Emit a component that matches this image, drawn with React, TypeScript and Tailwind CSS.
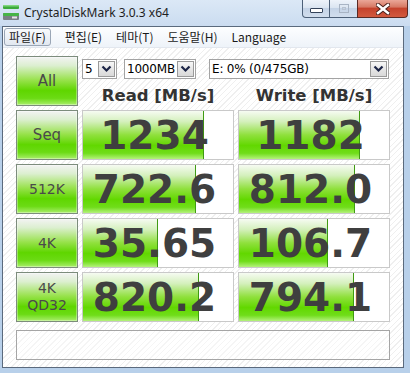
import React from "react";

type Row = {
  label: string[];
  big: boolean;
  read: string;
  rw: number;
  write: string;
  ww: number;
};

const rows: Row[] = [
  { label: ["Seq"], big: true, read: "1234", rw: 121, write: "1182", ww: 121 },
  { label: ["512K"], big: false, read: "722.6", rw: 113, write: "812.0", ww: 116 },
  { label: ["4K"], big: false, read: "35.65", rw: 75, write: "106.7", ww: 89 },
  { label: ["4K", "QD32"], big: false, read: "820.2", rw: 116, write: "794.1", ww: 115 },
];

function Chevron() {
  return (
    <svg width="11" height="8" viewBox="0 0 11 8">
      <polyline points="1.5,1.5 5.5,5.5 9.5,1.5" fill="none" stroke="#1b2446" strokeWidth="2.2" />
    </svg>
  );
}

function Select({ w, text }: { w: string; text: string }) {
  return (
    <div className={`flex h-[20px] border border-[#a3a3a3] bg-white ${w}`}>
      <div className="min-w-0 flex-1 whitespace-nowrap pl-[2px] font-['DejaVu_Sans',sans-serif] text-[12px] leading-[18px] tracking-[-0.2px] text-black">
        {text}
      </div>
      <div className="m-px flex w-[17px] shrink-0 items-center justify-center border border-[#9a9a9a] bg-[linear-gradient(to_bottom,#f7f7f7,#e6e6e6_50%,#d9d9d9)]">
        <Chevron />
      </div>
    </div>
  );
}

function GreenButton({ label, big }: { label: string[]; big: boolean }) {
  return (
    <div className="flex h-[50px] flex-col items-center justify-center border border-[#7c8c7c] bg-[linear-gradient(to_bottom,#f3f3f3_0%,#dcefd0_18%,#98e24c_48%,#5fd600_70%,#6bdb14_86%,#aaee6c_100%)] shadow-[inset_0_0_0_1px_rgba(255,255,255,0.35)]">
      {label.map((l) => (
        <span
          key={l}
          className={`font-['DejaVu_Sans',sans-serif] text-[#4a4a4a] ${big ? "text-[15px] leading-[18px]" : "text-[14px] leading-[17px]"}`}
        >
          {l}
        </span>
      ))}
    </div>
  );
}

function ValueBox({ value, width }: { value: string; width: number }) {
  return (
    <div className="relative flex h-[50px] items-center justify-center border border-[#c9c9c9] bg-white pr-[7px]">
      <div
        className="absolute left-0 top-0 bottom-0 border-r border-[#3f9a12] bg-[linear-gradient(to_bottom,#f6fbf2_0%,#d4f0bc_22%,#8fe03c_50%,#62d800_72%,#70dd1a_88%,#b4f27c_100%)]"
        style={{ width }}
      />
      <span className="relative font-['DejaVu_Sans',sans-serif] text-[39px] font-bold leading-none text-[#3f3f3f]">
        {value}
      </span>
    </div>
  );
}

function AppIcon() {
  return (
    <svg width="16" height="15" viewBox="0 0 16 15">
      <rect x="0" y="0" width="16" height="4" rx="1" fill="#3caa3c" />
      <rect x="0" y="0" width="16" height="1.5" fill="#7fd67f" />
      <rect x="0" y="8" width="16" height="7" rx="1" fill="#7a7f86" />
      <rect x="0" y="8" width="16" height="3" rx="1" fill="#46b446" />
      <rect x="9" y="11.5" width="5" height="2" fill="#e6e6e6" />
    </svg>
  );
}

export default function App() {
  const menu = ["편집(E)", "테마(T)", "도움말(H)", "Language"];
  return (
    <div className="flex h-[373px] w-[410px] flex-col overflow-hidden bg-[#b8d0ea] font-['Noto_Sans',sans-serif]">
      {/* title bar */}
      <div className="flex h-[26px] shrink-0 items-start bg-[linear-gradient(to_bottom,#dbe8f6,#cbdcf0)]">
        <div className="ml-[3px] mt-[5px]">
          <AppIcon />
        </div>
        <div className="ml-[5px] mt-[4px] font-['Noto_Sans',sans-serif] text-[12px] leading-[17px] text-[#1e1e1e]">
          CrystalDiskMark 3.0.3 x64
        </div>
        <div className="ml-auto mr-[2px] flex h-[18px]">
          <div className="flex w-[28px] items-center justify-center rounded-bl-[4px] border border-t-0 border-[#4d6078] bg-[linear-gradient(to_bottom,#eef3fa,#dbe5f1_45%,#c4d3e6_50%,#d2deed)]">
            <div className="mt-[4px] h-[5px] w-[13px] rounded-[1px] border border-[#34435a] bg-white" />
          </div>
          <div className="flex w-[27px] items-center justify-center border-b border-[#4d6078] bg-[linear-gradient(to_bottom,#eef3fa,#dbe5f1_45%,#c4d3e6_50%,#d2deed)]">
            <div className="flex h-[9px] w-[10px] items-center justify-center border border-[#a8b4c4]">
              <div className="h-[3px] w-[4px] border border-[#b8c2d0]" />
            </div>
          </div>
          <div className="flex w-[51px] items-center justify-center rounded-br-[4px] border border-t-0 border-[#5a2a24] bg-[linear-gradient(to_bottom,#eaa798,#d77a66_40%,#c5432d_50%,#d25a3f)]">
            <svg width="14" height="12" viewBox="0 0 14 12">
              <path d="M2 2 L12 10 M12 2 L2 10" stroke="#4a1f1a" strokeWidth="4.5" strokeLinecap="square" />
              <path d="M2 2 L12 10 M12 2 L2 10" stroke="#ffffff" strokeWidth="2.5" strokeLinecap="square" />
            </svg>
          </div>
        </div>
      </div>

      {/* client frame */}
      <div className="mb-[5px] ml-[2px] mr-[6px] flex flex-1 flex-col border border-[#5b6a7d]">
        {/* menu bar */}
        <div className="flex h-[21px] shrink-0 items-center border-b border-[#e2e7ee] bg-[linear-gradient(to_bottom,#fdfeff,#eef3f9)] pl-px font-['Noto_Sans_CJK_KR','Noto_Sans',sans-serif] text-[12px] text-[#1a1a1a]">
          <div className="flex h-[18px] items-center rounded-[3px] border border-[#9aa6b6] bg-[linear-gradient(to_bottom,#f8fafc,#e2e8f0)] px-[4px] leading-none">
            파일(F)
          </div>
          {menu.map((m) => (
            <div key={m} className="ml-[14px] leading-none">
              {m}
            </div>
          ))}
        </div>

        {/* client */}
        <div className="flex-1 bg-[repeating-linear-gradient(135deg,#ffffff_0px,#ffffff_3px,#efefef_3px,#efefef_4px)] pl-[13px] pt-[8px]">
          <div className="grid grid-cols-[62px_152px_152px] gap-x-[4px] gap-y-[4px]">
            <GreenButton label={["All"]} big={true} />
            <div className="col-span-2 flex h-[50px] flex-col">
              <div className="mt-[3px] flex">
                <Select w="w-[35px]" text="5" />
                <Select w="ml-[7px] w-[72px]" text="1000MB" />
                <Select w="ml-[13px] w-[180px]" text="E: 0% (0/475GB)" />
              </div>
              <div className="mt-[7px] grid grid-cols-2 gap-x-[4px] font-['DejaVu_Sans',sans-serif] text-[16.5px] font-bold leading-[20px] text-[#333333]">
                <div className="text-center">Read [MB/s]</div>
                <div className="text-center">Write [MB/s]</div>
              </div>
            </div>
            {rows.map((r) => (
              <React.Fragment key={r.read}>
                <GreenButton label={r.label} big={r.big} />
                <ValueBox value={r.read} width={r.rw} />
                <ValueBox value={r.write} width={r.ww} />
              </React.Fragment>
            ))}
          </div>
          <div className="mt-[8px] h-[30px] w-[374px] border border-[#a5a5a5] bg-white/40" />
        </div>
      </div>
    </div>
  );
}
